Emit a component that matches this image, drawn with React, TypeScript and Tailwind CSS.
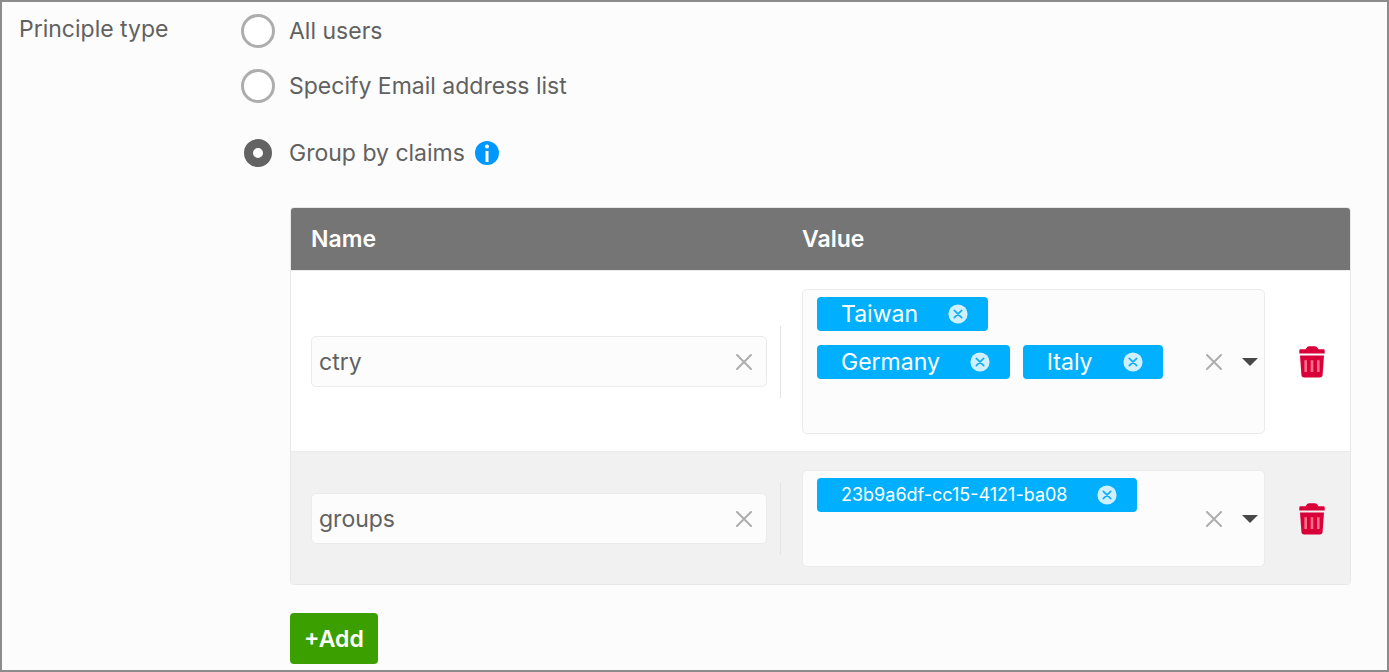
import { useState } from "react";

interface Claim {
  id: number;
  name: string;
  values: string[];
  compact?: boolean;
}

const PRINCIPLE_TYPES = [
  { key: "all", label: "All users", className: "" },
  { key: "email", label: "Specify Email address list", className: "mt-[21px]" },
  { key: "claims", label: "Group by claims", className: "mt-[33px]" },
];

const INITIAL_CLAIMS: Claim[] = [
  { id: 1, name: "ctry", values: ["Taiwan", "Germany", "Italy"] },
  { id: 2, name: "groups", values: ["23b9a6df-cc15-4121-ba08"], compact: true },
];

function InfoIcon() {
  return (
    <svg width="24" height="24" viewBox="0 0 24 24" aria-hidden="true">
      <circle cx="12" cy="12" r="12" fill="#0098ff" />
      <circle cx="12" cy="5.6" r="2" fill="#fff" />
      <path d="M10.5 10h3v11h-3z" fill="#fff" />
    </svg>
  );
}

function CrossIcon() {
  return (
    <svg width="16" height="16" viewBox="0 0 16 16" aria-hidden="true">
      <path
        d="M1 1l14 14M15 1L1 15"
        stroke="#adadad"
        strokeWidth="2"
        strokeLinecap="round"
      />
    </svg>
  );
}

function ChipCloseIcon() {
  return (
    <svg width="20" height="20" viewBox="0 0 20 20" aria-hidden="true">
      <circle cx="10" cy="10" r="9.6" fill="#d0f0ff" />
      <path
        d="M6.3 6.3l7.4 7.4M13.7 6.3l-7.4 7.4"
        stroke="#14aef5"
        strokeWidth="1.7"
        strokeLinecap="round"
      />
    </svg>
  );
}

function TrashIcon() {
  return (
    <svg width="26" height="32" viewBox="0 0 26 32" aria-hidden="true">
      <path
        d="M1.5 3.2h5L8 1.2Q8.9.2 10.2.2h5.6q1.3 0 2.2 1l1.5 2h5q1.2 0 1.2 1.2v3H.3v-3q0-1.2 1.2-1.2z"
        fill="#d9003a"
      />
      <path
        d="M1 9.4h24l-1.4 19.4q-.2 2.7-2.8 2.7H5.2q-2.6 0-2.8-2.7z"
        fill="#d9003a"
      />
      <path
        d="M6.7 14.3v11.8M13 14.3v11.8M19.3 14.3v11.8"
        stroke="#ff7088"
        strokeWidth="2.6"
      />
    </svg>
  );
}

interface ClaimRowProps {
  claim: Claim;
  onChange: (claim: Claim) => void;
  onDelete: (id: number) => void;
}

function ClaimRow({ claim, onChange, onDelete }: ClaimRowProps) {
  return (
    <tr className="bg-white even:bg-[#f1f1f1]">
      <td className="border-t border-[#ebebeb] pt-[18px] pb-[17px] pl-5">
        <div className="flex items-center">
          <div className="flex h-[51px] flex-1 items-center rounded-[5px] border border-[#ebebeb] bg-[#fcfcfc] pr-[14px] pl-[7px]">
            <input
              type="text"
              aria-label="Claim name"
              value={claim.name}
              onChange={(e) => onChange({ ...claim, name: e.target.value })}
              className="min-w-0 flex-1 bg-transparent outline-none"
            />
            <button
              type="button"
              aria-label="Clear name"
              onClick={() => onChange({ ...claim, name: "" })}
            >
              <CrossIcon />
            </button>
          </div>
          <div className="ml-[13px] h-[72px] w-px bg-[#e4e4e4]" />
        </div>
      </td>

      <td className="border-t border-[#ebebeb] pt-[18px] pb-[17px] pl-[21px]">
        <div className="flex rounded-[5px] border border-[#ebebeb] bg-[#fcfcfc] pr-[6px] pl-[14px]">
          <div className="flex flex-1 flex-wrap gap-x-[13px] gap-y-[14px] pt-[7px] pb-[6px]">
            {claim.values.map((value) => (
              <span
                key={value}
                className="flex h-[34px] items-center gap-[30px] rounded-[4px] bg-[#00b0ff] pr-5 pl-6 text-white"
              >
                <span className={claim.compact ? "text-[18px]" : ""}>
                  {value}
                </span>
                <button
                  type="button"
                  aria-label={`Remove ${value}`}
                  onClick={() =>
                    onChange({
                      ...claim,
                      values: claim.values.filter((v) => v !== value),
                    })
                  }
                >
                  <ChipCloseIcon />
                </button>
              </span>
            ))}
            <input
              type="text"
              aria-label="Add value"
              className="h-[34px] w-full bg-transparent outline-none"
            />
          </div>
          <div className="ml-8 flex items-center gap-5">
            <button
              type="button"
              aria-label="Clear values"
              onClick={() => onChange({ ...claim, values: [] })}
            >
              <CrossIcon />
            </button>
            <button type="button" aria-label="Show options">
              <svg width="16" height="8" viewBox="0 0 16 8" aria-hidden="true">
                <path d="M0 0h16L8 8z" fill="#484848" />
              </svg>
            </button>
          </div>
        </div>
      </td>

      <td className="border-t border-[#ebebeb] pt-[18px] pb-[17px]">
        <div className="flex justify-center pl-2">
          <button
            type="button"
            aria-label="Delete claim"
            onClick={() => onDelete(claim.id)}
          >
            <TrashIcon />
          </button>
        </div>
      </td>
    </tr>
  );
}

export default function App() {
  const [principleType, setPrincipleType] = useState("claims");
  const [claims, setClaims] = useState(INITIAL_CLAIMS);

  const updateClaim = (next: Claim) =>
    setClaims(claims.map((c) => (c.id === next.id ? next : c)));

  const deleteClaim = (id: number) =>
    setClaims(claims.filter((c) => c.id !== id));

  const addClaim = () =>
    setClaims([...claims, { id: Date.now(), name: "", values: [] }]);

  return (
    <main className="flex min-h-screen border-2 border-[#8c8c8c] bg-[#fcfcfc] pt-3 pr-9 pb-[6px] pl-[17px] font-['Inter',sans-serif] text-[23px] leading-[30px] text-[#616161] [&_button]:flex">
      <div id="principle-type" className="w-[222px] shrink-0">
        Principle type
      </div>

      <div className="min-w-0 flex-1">
        <div role="radiogroup" aria-labelledby="principle-type">
          {PRINCIPLE_TYPES.map((type) => (
            <div
              key={type.key}
              className={`flex h-[34px] items-center ${type.className}`}
            >
              <label className="flex items-center gap-[14px]">
                <span className="flex size-[34px] items-center justify-center">
                  <input
                    type="radio"
                    name="principleType"
                    checked={principleType === type.key}
                    onChange={() => setPrincipleType(type.key)}
                    className="size-[34px] appearance-none rounded-full border-3 border-[#adadad] bg-white checked:size-7 checked:border-9 checked:border-[#636363]"
                  />
                </span>
                {type.label}
              </label>
              {type.key === "claims" && (
                <button type="button" aria-label="About claims" className="ml-[10px]">
                  <InfoIcon />
                </button>
              )}
            </div>
          ))}
        </div>

        <div className="mt-[37px] ml-[49px]">
          <div className="overflow-hidden rounded-[4px] border border-[#e8e8e8]">
            <table className="w-full table-fixed border-separate border-spacing-0">
              <thead>
                <tr className="h-[62px] bg-[#757575] text-left text-white">
                  <th className="pl-5 font-semibold">Name</th>
                  <th className="w-[484px] pl-[21px] font-semibold">Value</th>
                  <th className="w-[85px]" aria-label="Actions" />
                </tr>
              </thead>
              <tbody>
                {claims.map((claim) => (
                  <ClaimRow
                    key={claim.id}
                    claim={claim}
                    onChange={updateClaim}
                    onDelete={deleteClaim}
                  />
                ))}
              </tbody>
            </table>
          </div>

          <button
            type="button"
            onClick={addClaim}
            className="mt-7 h-[51px] items-center rounded-[4px] bg-[#3c9f00] px-[14px] font-semibold text-white"
          >
            +Add
          </button>
        </div>
      </div>
    </main>
  );
}
